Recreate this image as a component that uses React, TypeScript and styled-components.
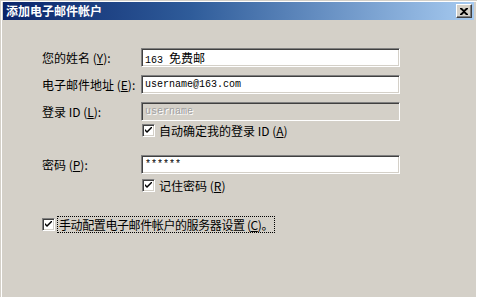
import { createGlobalStyle, styled } from "styled-components";

const GlobalStyle = createGlobalStyle`
  html, body {
    margin: 0;
    padding: 0;
    background: #d4d0c8;
  }
  body {
    font-family: "Noto Sans CJK SC", "DejaVu Sans", sans-serif;
    font-size: 12px;
    color: #000;
  }
`;

const Window = styled.div`
  box-sizing: border-box;
  width: 477px;
  height: 297px;
  overflow: hidden;
  background: #d4d0c8;
  border-top: 1px solid #d4d0c8;
  border-left: 1px solid #d4d0c8;
  box-shadow: inset 1px 1px 0 #ffffff, inset -1px 0 0 #ffffff;
  padding: 0 3px 0 2px;
  display: flex;
  flex-direction: column;
`;

const TitleBar = styled.div`
  height: 18px;
  margin-top: 1px;
  background: linear-gradient(to right, #0a246a 0%, #2f5c9a 40%, #a6caf0 100%);
  display: flex;
  align-items: center;
  justify-content: space-between;
  padding: 0 2px 0 3px;
`;

const Title = styled.span`
  color: #fff;
  font-weight: bold;
  font-size: 12px;
  line-height: 18px;
`;

const CloseButton = styled.div`
  box-sizing: border-box;
  width: 16px;
  height: 14px;
  background: #d4d0c8;
  border-top: 1px solid #ffffff;
  border-left: 1px solid #ffffff;
  border-right: 1px solid #404040;
  border-bottom: 1px solid #404040;
  box-shadow: inset -1px -1px 0 #808080;
  display: flex;
  align-items: center;
  justify-content: center;
`;

const Body = styled.div`
  flex: 1;
  padding: 28px 0 0 39px;
`;

const Form = styled.div`
  display: grid;
  grid-template-columns: 99px 259px;
  align-items: center;
`;

const Label = styled.label<{ $gap?: number }>`
  height: 19px;
  line-height: 19px;
  margin-top: ${(p) => p.$gap ?? 0}px;
  white-space: nowrap;
`;

const Input = styled.div<{ $disabled?: boolean; $gap?: number }>`
  box-sizing: border-box;
  height: 19px;
  margin-top: ${(p) => p.$gap ?? 0}px;
  background: ${(p) => (p.$disabled ? "#d4d0c8" : "#ffffff")};
  border-top: 1px solid #808080;
  border-left: 1px solid #808080;
  border-right: 1px solid #ffffff;
  border-bottom: 1px solid #ffffff;
  box-shadow: inset 1px 1px 0 #404040, inset -1px -1px 0 #d4d0c8;
  padding: 0 3px;
  font-family: "Liberation Mono", "Noto Sans CJK SC", monospace;
  font-size: 10px;
  line-height: 17px;
  color: ${(p) => (p.$disabled ? "#a0a0a0" : "#000")};
  text-shadow: ${(p) => (p.$disabled ? "1px 1px 0 #ffffff" : "none")};
  white-space: nowrap;
`;

const Cjk = styled.span`
  font-family: "Noto Sans CJK SC", sans-serif;
  font-size: 12px;
`;

const CheckRow = styled.div<{ $gap?: number }>`
  grid-column: 2;
  height: 18px;
  margin-top: ${(p) => p.$gap ?? 0}px;
  display: flex;
  align-items: center;
  gap: 4px;
  padding-left: 1px;
`;

const Box = styled.span`
  box-sizing: border-box;
  width: 13px;
  height: 13px;
  background: #ffffff;
  border-top: 1px solid #808080;
  border-left: 1px solid #808080;
  border-right: 1px solid #ffffff;
  border-bottom: 1px solid #ffffff;
  box-shadow: inset 1px 1px 0 #404040, inset -1px -1px 0 #d4d0c8;
  display: flex;
  align-items: center;
  justify-content: center;
  flex: none;
`;

const BottomRow = styled.div`
  margin-top: 21px;
  height: 18px;
  display: flex;
  align-items: center;
  gap: 3px;
`;

const Focus = styled.span`
  outline: 1px dotted #000;
  padding: 0 1px;
  line-height: 15px;
  letter-spacing: -0.4px;
`;

const Check = () => (
  <Box>
    <svg width="7" height="7" viewBox="0 0 7 7">
      <path d="M0 2 L0 4 L2 6 L7 1 L7 -1 L2 4 Z" fill="#000" />
    </svg>
  </Box>
);

const App = () => {
  return (
    <>
      <GlobalStyle />
      <Window>
        <TitleBar>
          <Title>添加电子邮件帐户</Title>
          <CloseButton>
            <svg width="8" height="7" viewBox="0 0 8 7">
              <path
                d="M0 0h2l2 2 2-2h2v1L5 3.5 8 6v1H6L4 5 2 7H0V6l3-2.5L0 1z"
                fill="#000"
              />
            </svg>
          </CloseButton>
        </TitleBar>
        <Body>
          <Form>
            <Label>
              您的姓名 (<u>Y</u>):
            </Label>
            <Input>
              163 <Cjk>免费邮</Cjk>
            </Input>
            <Label $gap={8}>
              电子邮件地址 (<u>E</u>):
            </Label>
            <Input $gap={8}>username@163.com</Input>
            <Label $gap={8}>
              登录 ID (<u>L</u>):
            </Label>
            <Input $gap={8} $disabled>
              username
            </Input>
            <CheckRow>
              <Check />
              <span>
                自动确定我的登录 ID (<u>A</u>)
              </span>
            </CheckRow>
            <Label $gap={16}>
              密码 (<u>P</u>):
            </Label>
            <Input $gap={16}>******</Input>
            <CheckRow $gap={2}>
              <Check />
              <span>
                记住密码 (<u>R</u>)
              </span>
            </CheckRow>
          </Form>
          <BottomRow>
            <Check />
            <Focus>
              手动配置电子邮件帐户的服务器设置 (<u>C</u>)。
            </Focus>
          </BottomRow>
        </Body>
      </Window>
    </>
  );
};

export default App;
